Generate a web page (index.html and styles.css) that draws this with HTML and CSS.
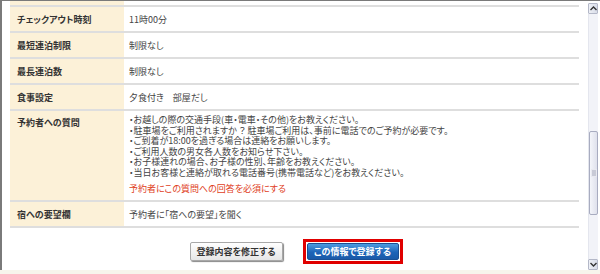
FILE: index.html
```html
<!DOCTYPE html>
<html lang="ja">
  <head>
    <meta charset="UTF-8" />
    <meta name="viewport" content="width=device-width, initial-scale=1.0" />
    <title>プラン登録内容の確認</title>
    <link rel="stylesheet" href="styles.css">
  </head>
  <body>
    <div class="window">
      <div class="content">
        <table class="table">
          <tr class="row-cut">
            <th></th>
            <td></td>
          </tr>
          <tr>
            <th>チェックアウト時刻</th>
            <td>11時00分</td>
          </tr>
          <tr>
            <th>最短連泊制限</th>
            <td>制限なし</td>
          </tr>
          <tr>
            <th>最長連泊数</th>
            <td>制限なし</td>
          </tr>
          <tr>
            <th>食事設定</th>
            <td>夕食付き　部屋だし</td>
          </tr>
          <tr class="row-tall">
            <th>予約者への質問</th>
            <td>
              <ul class="questions">
                <li>・お越しの際の交通手段(車・電車・その他)をお教えください。</li>
                <li>・駐車場をご利用されますか ？ 駐車場ご利用は、事前に電話でのご予約が必要です。</li>
                <li>・ご到着が18:00を過ぎる場合は連絡をお願いします。</li>
                <li>・ご利用人数の男女各人数をお知らせ下さい。</li>
                <li>・お子様連れの場合、お子様の性別、年齢をお教えください。</li>
                <li>・当日お客様と連絡が取れる電話番号(携帯電話など)をお教えください。</li>
              </ul>
              <p class="required">予約者にこの質問への回答を必須にする</p>
            </td>
          </tr>
          <tr>
            <th>宿への要望欄</th>
            <td>予約者に「宿への要望」を聞く</td>
          </tr>
        </table>

        <!-- Buttons -->
        <div class="actions">
          <button class="btn btn-gray">登録内容を修正する</button>
          <div class="focus-ring">
            <button class="btn btn-blue">この情報で登録する</button>
          </div>
        </div>
      </div>

      <!-- Scrollbar -->
      <div class="scrollbar">
        <div class="arrow">
          <svg width="7" height="5" viewBox="0 0 7 5"><path d="M0.5 4 L3.5 1 L6.5 4" fill="none" stroke="#333" stroke-width="1.4"/></svg>
        </div>
        <div class="track">
          <div class="thumb"><span class="grip"></span></div>
        </div>
        <div class="arrow">
          <svg width="7" height="5" viewBox="0 0 7 5"><path d="M0.5 1 L3.5 4 L6.5 1" fill="none" stroke="#333" stroke-width="1.4"/></svg>
        </div>
      </div>
    </div>
    <div class="status"></div>
  </body>
</html>
```

FILE: styles.css
```css
body {
  font-family: "Noto Sans CJK JP", "Liberation Sans", sans-serif;
  font-feature-settings: "palt";
  font-size: 9px;
  color: #444;
  margin: 0;
  padding: 0;
  background-color: #fff;
}

.window {
  display: flex;
  width: 600px;
  height: 270px;
  box-sizing: border-box;
  border-top: 1px solid #7a7a7a;
  border-left: 2px solid #7a7a7a;
}

.content {
  flex: 1;
  padding: 0 9px 0 8px;
  overflow: hidden;
}

.status {
  height: 4px;
  background-color: #f7f5ec;
}

/* Table */
.table {
  width: 100%;
  border-collapse: collapse;
}

.table th,
.table td {
  height: 24px;
  padding: 0;
  border-bottom: 2px solid #dedede;
  text-align: left;
  vertical-align: middle;
}

.table th {
  width: 107px;
  padding-left: 7px;
  background-color: #fcf1d8;
  color: #333;
  font-weight: bold;
}

.table td {
  padding-left: 5px;
}

.row-cut th,
.row-cut td {
  height: 4px;
}

.row-tall th {
  vertical-align: top;
  padding-top: 5px;
  height: auto;
}

.row-tall td {
  height: 85px;
  vertical-align: top;
  padding-top: 4px;
}

.questions {
  list-style: none;
  margin: 0;
  padding: 0;
  line-height: 10.5px;
}

.required {
  margin: 4px 0 0;
  color: #e0401c;
}

/* Buttons */
.actions {
  display: flex;
  justify-content: center;
  align-items: center;
  gap: 20px;
  margin-top: 11px;
  padding-left: 3px;
}

.btn {
  font-family: inherit;
  font-feature-settings: "palt";
  font-size: 9px;
  font-weight: bold;
  padding: 0;
  border-radius: 2px;
  cursor: pointer;
}

.btn-gray {
  width: 93px;
  height: 19px;
  color: #333;
  background: linear-gradient(#ffffff, #e6e6e6);
  border: 1px solid #a8a8a8;
  box-shadow: 1px 1px 1px #888;
}

.focus-ring {
  border: 3px solid #e00000;
  padding: 1px;
}

.btn-blue {
  display: block;
  width: 92px;
  height: 17px;
  color: #fff;
  background: linear-gradient(#4d9be0, #1d64b8 55%, #1a5aa8);
  border: 1px solid #1a4f94;
}

/* Scrollbar */
.scrollbar {
  width: 10px;
  display: flex;
  flex-direction: column;
  padding: 2px 2px 0 0;
  box-sizing: content-box;
}

.arrow {
  height: 9px;
  border: 1px solid #b4b8c8;
  border-radius: 1px;
  background: linear-gradient(90deg, #eef0f6, #d8dce8);
  display: flex;
  align-items: center;
  justify-content: center;
}

.track {
  flex: 1;
  background-color: #f2f3f8;
  border-left: 1px solid #e4e6ee;
  display: flex;
  flex-direction: column;
  padding-top: 117px;
  padding-bottom: 44px;
}

.thumb {
  flex: 1;
  border: 1px solid #a8acc0;
  border-radius: 2px;
  background: linear-gradient(90deg, #f4f5fa, #dfe1ec);
  display: flex;
  align-items: center;
  justify-content: center;
}

.grip {
  width: 4px;
  height: 6px;
  background-color: #c8cad6;
  border: 1px solid #e8e9f0;
}
```
